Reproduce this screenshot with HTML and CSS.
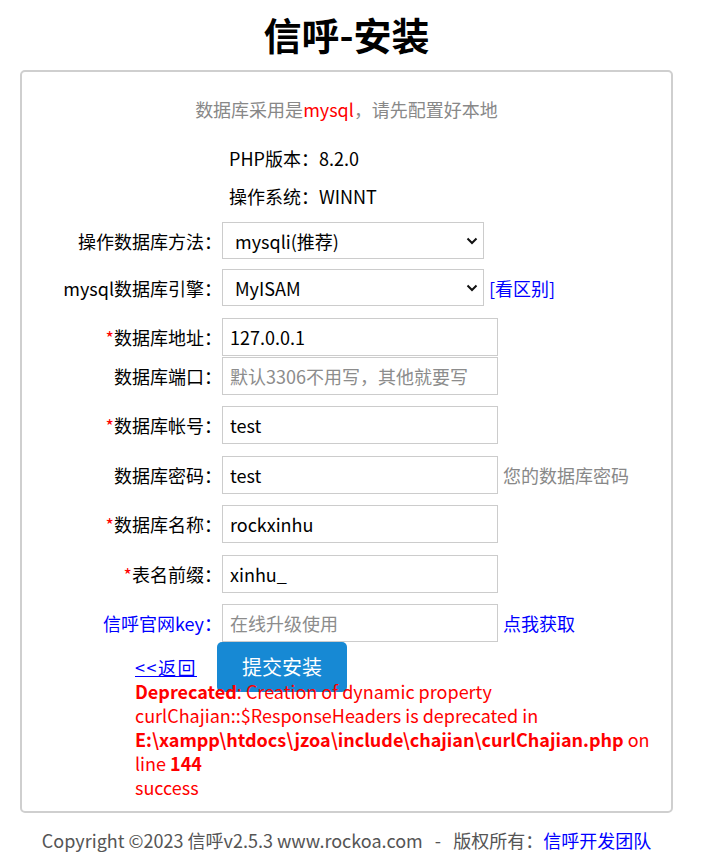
FILE: index.html
```html
<!DOCTYPE html>
<html lang="zh-CN">
<head>
  <meta charset="UTF-8" />
  <meta name="viewport" content="width=device-width, initial-scale=1.0" />
  <title>信呼-安装</title>
  <link rel="stylesheet" href="styles.css">
</head>
<body>
  <div class="page">
    <h1 class="title">信呼-安装</h1>

    <div class="panel">
      <div class="notice">数据库采用是<span class="red">mysql</span>，请先配置好本地</div>

      <div class="info">
        <div class="info-line">PHP版本：8.2.0</div>
        <div class="info-line">操作系统：WINNT</div>
      </div>

      <div class="form">
        <div class="row row-select">
          <label class="label">操作数据库方法：</label>
          <span class="select-wrap">
            <select class="select">
              <option>mysqli(推荐)</option>
              <option>pdo</option>
            </select>
            <svg class="chevron" width="12" height="8" viewBox="0 0 12 8"><path d="M1.5 1.5 L6 6 L10.5 1.5" fill="none" stroke="#111" stroke-width="2"/></svg>
          </span>
        </div>

        <div class="row row-select">
          <label class="label">mysql数据库引擎：</label>
          <span class="select-wrap">
            <select class="select">
              <option>MyISAM</option>
              <option>InnoDB</option>
            </select>
            <svg class="chevron" width="12" height="8" viewBox="0 0 12 8"><path d="M1.5 1.5 L6 6 L10.5 1.5" fill="none" stroke="#111" stroke-width="2"/></svg>
          </span>
          <a class="note link" href="#">[看区别]</a>
        </div>

        <div class="row">
          <label class="label"><span class="red">*</span>数据库地址：</label>
          <input class="input" type="text" value="127.0.0.1">
        </div>

        <div class="row row-tight">
          <label class="label">数据库端口：</label>
          <input class="input" type="text" placeholder="默认3306不用写，其他就要写">
        </div>

        <div class="row">
          <label class="label"><span class="red">*</span>数据库帐号：</label>
          <input class="input" type="text" value="test">
        </div>

        <div class="row">
          <label class="label">数据库密码：</label>
          <input class="input" type="text" value="test">
          <span class="note grey">您的数据库密码</span>
        </div>

        <div class="row">
          <label class="label"><span class="red">*</span>数据库名称：</label>
          <input class="input" type="text" value="rockxinhu">
        </div>

        <div class="row">
          <label class="label"><span class="red">*</span>表名前缀：</label>
          <input class="input" type="text" value="xinhu_">
        </div>

        <div class="row">
          <label class="label link">信呼官网key：</label>
          <input class="input" type="text" placeholder="在线升级使用">
          <a class="note link" href="#">点我获取</a>
        </div>
      </div>

      <div class="actions">
        <a class="back" href="#">&lt;&lt;返回</a>
        <button class="submit" type="button">提交安装</button>
      </div>

      <div class="output">
        <b>Deprecated</b>: Creation of dynamic property<br>
        curlChajian::$ResponseHeaders is deprecated in<br>
        <b>E:\xampp\htdocs\jzoa\include\chajian\curlChajian.php</b> on<br>
        line <b>144</b><br>
        success
      </div>
    </div>

    <div class="footer">
      Copyright ©2023 信呼v2.5.3 www.rockoa.com &nbsp; - &nbsp; 版权所有：<a class="link" href="#">信呼开发团队</a>
    </div>
  </div>
</body>
</html>
```

FILE: styles.css
```css
* {
  box-sizing: border-box;
  margin: 0;
  padding: 0;
}

body {
  font-family: 'Noto Sans CJK SC', 'Noto Sans', sans-serif;
  font-size: 18px;
  line-height: 24px;
  color: #000;
  background: #fff;
}

.page {
  width: 653px;
  margin-left: 20px;
}

.title {
  font-size: 38px;
  line-height: 50px;
  font-weight: bold;
  text-align: center;
  margin: 9px 0 11px;
}

.panel {
  border: 2px solid #cfcfcf;
  border-radius: 5px;
  padding: 25px 0 12px;
}

.red {
  color: #f00;
}

.grey {
  color: #888;
}

.link {
  color: #00f;
  text-decoration: none;
}

.notice {
  text-align: center;
  color: #888;
}

.info {
  margin-top: 25px;
  padding-left: 207px;
  display: flex;
  flex-direction: column;
  gap: 14px;
}

.form {
  margin-top: 14px;
}

.row {
  display: flex;
  align-items: center;
  margin-top: 11.5px;
}

.row-select {
  margin-top: 10px;
}

.row:first-child {
  margin-top: 0;
}

.row-tight {
  margin-top: 1px;
}

.label {
  width: 200px;
  text-align: right;
  flex-shrink: 0;
}

.select-wrap {
  position: relative;
  display: inline-block;
}

.select {
  appearance: none;
  -webkit-appearance: none;
  width: 262px;
  height: 37px;
  border: 1px solid #ccc;
  border-radius: 0;
  background: #fff;
  padding: 0 12px;
  font: inherit;
  color: #000;
  display: block;
}

.chevron {
  position: absolute;
  right: 6px;
  top: 15px;
  pointer-events: none;
}

.input {
  width: 276px;
  height: 38px;
  border: 1px solid #ccc;
  padding: 0 7px;
  font: inherit;
  color: #000;
  outline: none;
}

.input::placeholder {
  color: #8c8c8c;
}

.note {
  margin-left: 5px;
}

.actions {
  margin-top: 13px;
  height: 24px;
  padding-left: 113px;
  display: flex;
  align-items: center;
}

.back {
  color: #00f;
  text-decoration: underline;
  letter-spacing: 1.5px;
}

.submit {
  margin-left: 20px;
  width: 130px;
  height: 50px;
  flex-shrink: 0;
  border: none;
  border-radius: 5px;
  background: #1789d4;
  color: #fff;
  font: inherit;
  font-size: 20px;
}

.output {
  padding-left: 113px;
  color: #f00;
}

.footer {
  margin-top: 15px;
  text-align: center;
  color: #555;
}
```
